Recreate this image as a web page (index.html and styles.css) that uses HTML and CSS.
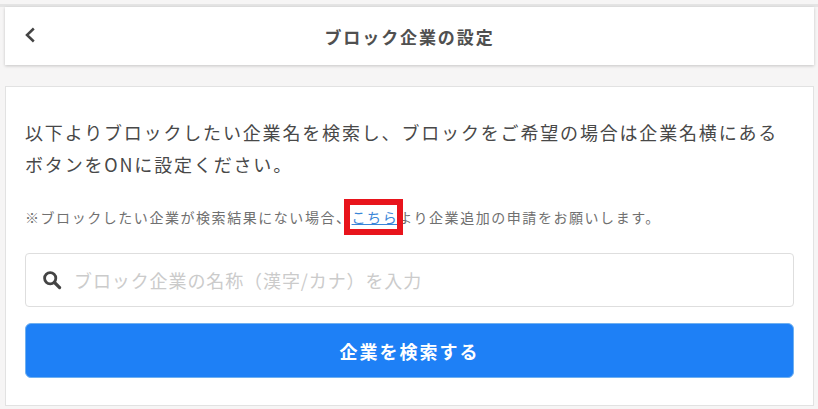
FILE: index.html
```html
<!DOCTYPE html>
<html lang="ja">
<head>
    <meta charset="UTF-8">
    <title>ブロック企業の設定</title>
    <link rel="stylesheet" href="styles.css">
</head>
<body>
<div class="page">
    <header class="header">
        <svg class="back" viewBox="0 0 12 16" width="12" height="16"><path d="M9.8 1.5 L3 8 L9.8 14.5" fill="none" stroke="#444" stroke-width="2.5"/></svg>
        <h1 class="title">ブロック企業の設定</h1>
    </header>
    <main class="card">
        <p class="lead">以下よりブロックしたい企業名を検索し、ブロックをご希望の場合は企業名横にあるボタンをONに設定ください。</p>
        <p class="note">※ブロックしたい企業が検索結果にない場合、<a class="link" href="#">こちら</a>より企業追加の申請をお願いします。</p>
        <div class="search">
            <svg class="search-icon" viewBox="0 0 20 20" width="20" height="20"><circle cx="8.2" cy="8.2" r="5.6" fill="none" stroke="#444" stroke-width="2.8"/><path d="M12.5 12.5 L17.6 17.6" stroke="#444" stroke-width="3.2" stroke-linecap="round"/></svg>
            <span class="placeholder">ブロック企業の名称（漢字/カナ）を入力</span>
        </div>
        <button class="submit">企業を検索する</button>
    </main>
</div>
</body>
</html>
```

FILE: styles.css
```css
*{
    margin: 0;
    padding: 0;
    box-sizing: border-box;
}
html, body{
    width: 100%;
    height: 100%;
    overflow: hidden;
}
body{
    background-color: #f6f5f5;
    font-family: "Noto Sans CJK JP", "Noto Sans", sans-serif;
    color: #444;
}
.page{
    padding: 7px 4px 0 5px;
    background: linear-gradient(transparent 4px, #e4e4e4 4px, #e4e4e4 7px, transparent 7px);
}
.header{
    height: 58px;
    display: flex;
    align-items: center;
    justify-content: center;
    position: relative;
    background-color: #fff;
    box-shadow: 0 1px 3px rgba(0,0,0,.2);
}
.back{
    position: absolute;
    left: 19px;
    top: 20px;
}
.title{
    font-size: 17px;
    font-weight: 700;
    letter-spacing: 1.9px;
    color: #505050;
}
.card{
    height: 320px;
    margin-top: 21px;
    padding: 29px 19px 0 19px;
    background-color: #fff;
    border: 1px solid #e2e2e2;
}
.lead{
    font-size: 18px;
    line-height: 32px;
    letter-spacing: 1.83px;
    color: #484848;
}
.note{
    margin-top: 25px;
    font-size: 14px;
    line-height: 24px;
    letter-spacing: 1.55px;
    color: #707070;
}
.link{
    position: relative;
    color: #3a86d8;
}
.link::after{
    content: "";
    position: absolute;
    left: -8px;
    right: -5px;
    top: -8px;
    bottom: -8px;
    border: 6px solid #e8141c;
}
.search{
    height: 54px;
    margin-top: 24px;
    padding-left: 16px;
    display: flex;
    align-items: center;
    gap: 12px;
    border: 1px solid #dedede;
    border-radius: 4px;
}
.placeholder{
    font-size: 18px;
    letter-spacing: .05em;
    color: #cbcbcb;
}
.submit{
    display: block;
    width: 100%;
    height: 55px;
    margin-top: 16px;
    background-color: #1e80f6;
    border: 1.5px solid #6fb0f0;
    border-radius: 6px;
    font-family: inherit;
    font-size: 18px;
    font-weight: 700;
    letter-spacing: 2px;
    color: #fff;
}
```
